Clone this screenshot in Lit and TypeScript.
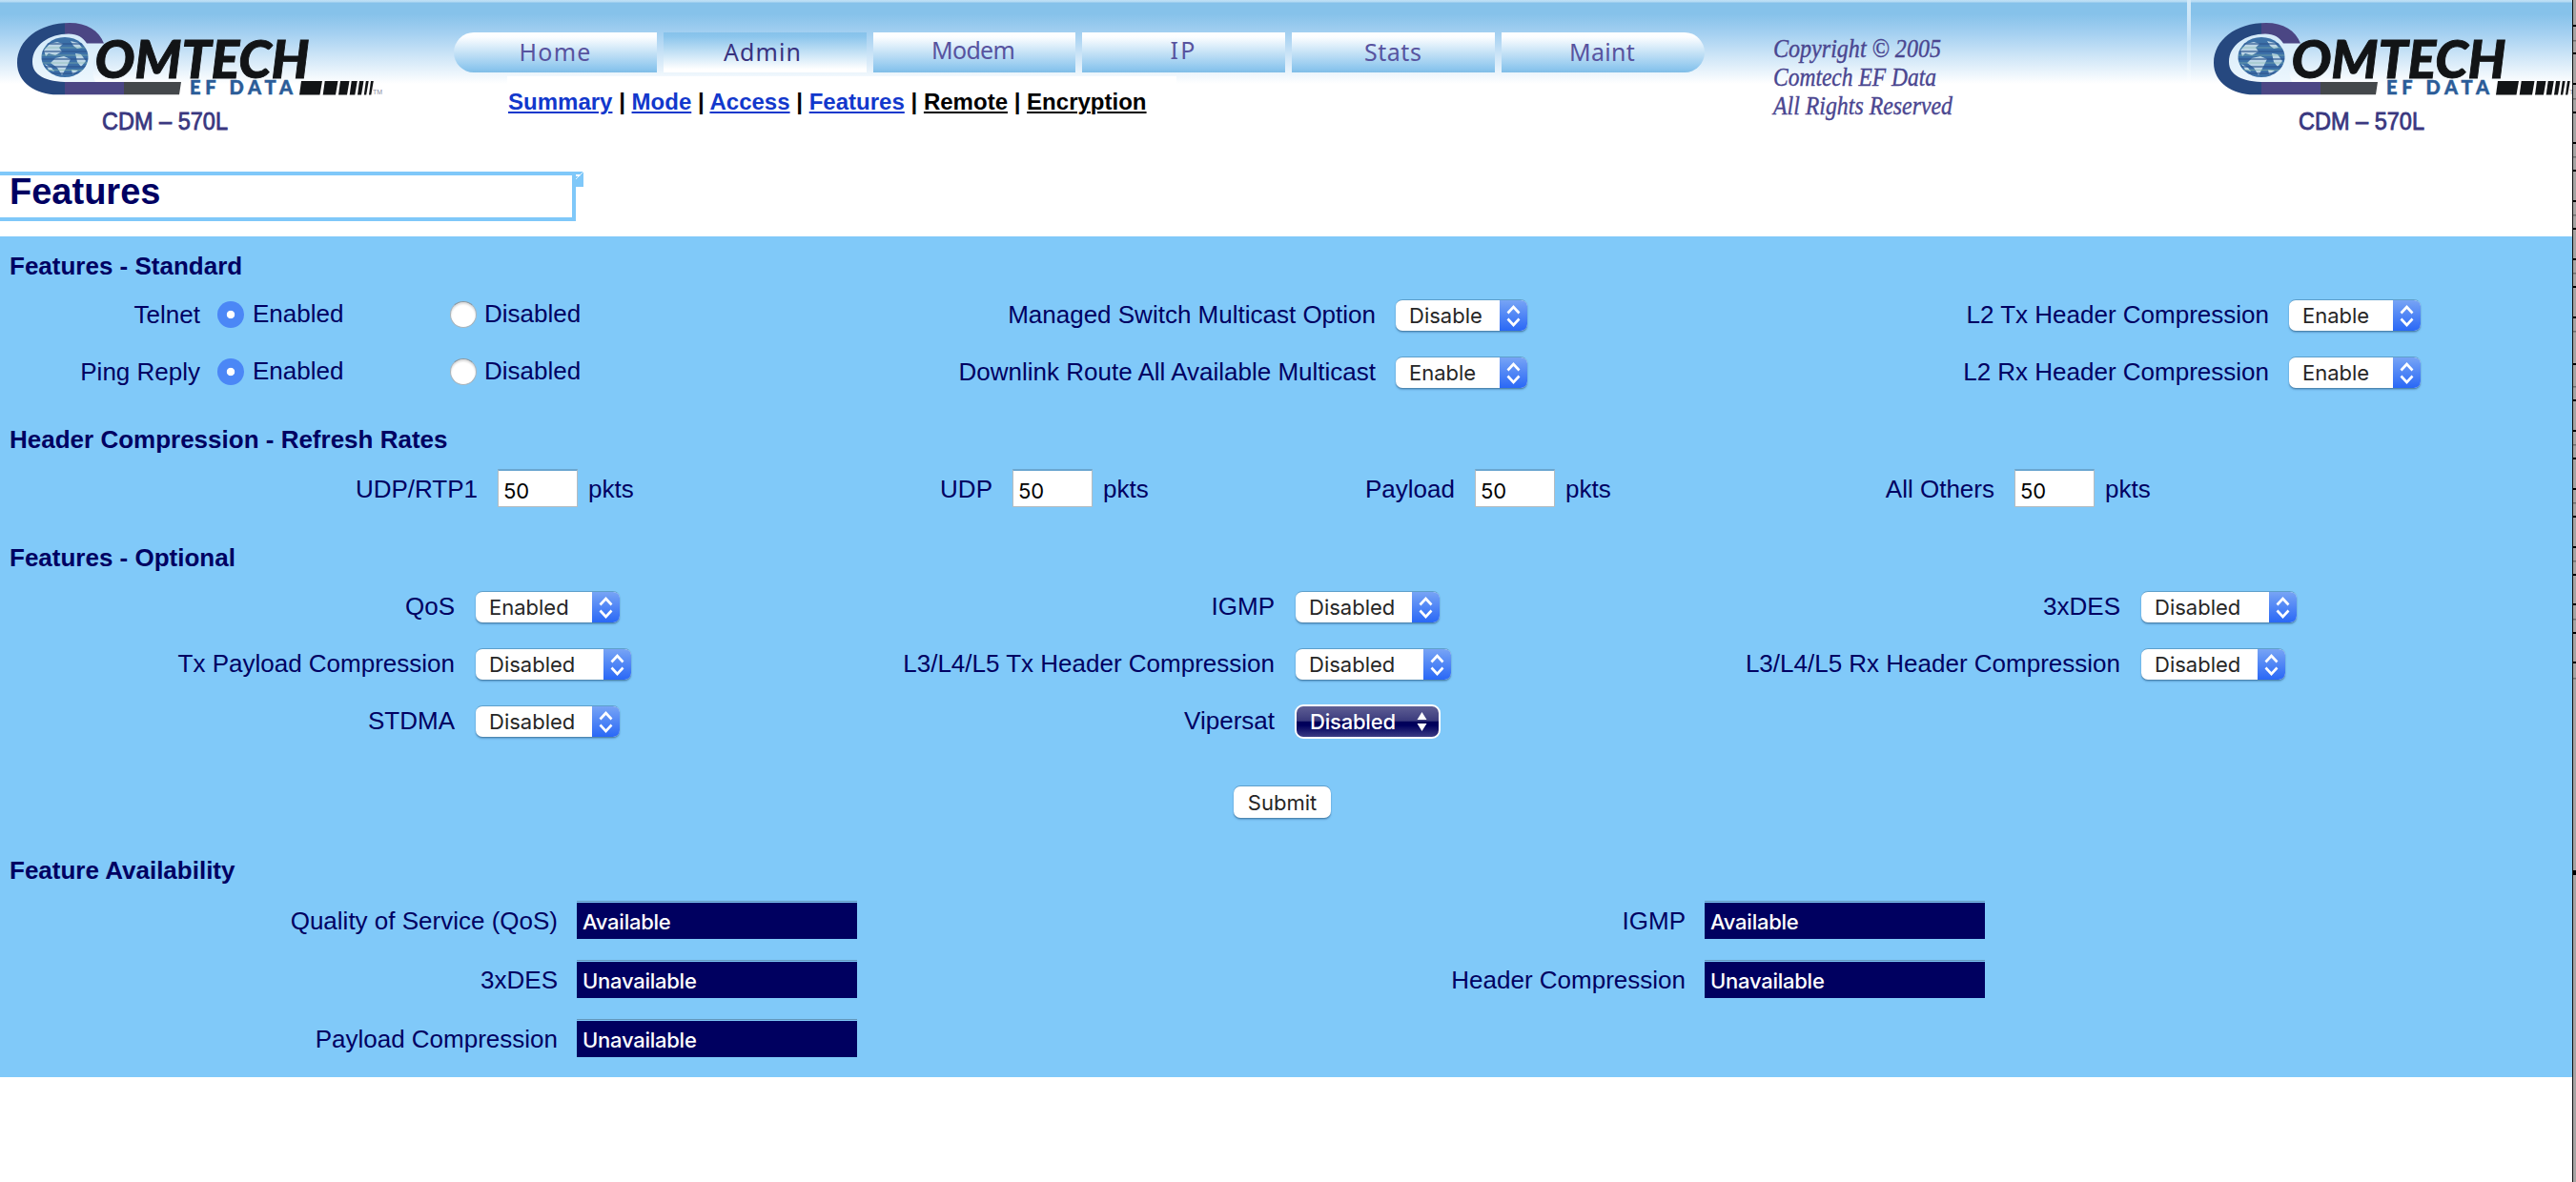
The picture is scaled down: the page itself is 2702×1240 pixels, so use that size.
import { LitElement, html, svg, css } from "lit";
import { customElement, property } from "lit/decorators.js";

@customElement("brand-logo")
class BrandLogo extends LitElement {
  static styles = css`
    :host { display: block; }
    .logo { display: block; overflow: hidden; }
    .word { font-family: Lato, "Liberation Sans", sans-serif; font-weight: 900; font-style: italic; }
    .sub { font-family: Lato, "Liberation Sans", sans-serif; font-weight: 900; }
    .model { font-family: "Liberation Sans", sans-serif; }
  `;
  @property({ type: Number }) width = 400;

  render() {
    const bars = [[314, 336.5], [338.7, 353], [355, 365], [366.7, 373.3], [375, 380], [381.8, 385.2], [387, 390.3]];
    return html`
      <svg class="logo" width=${this.width} height="150" viewBox="0 0 ${this.width} 150">
        <defs>
          <linearGradient id="ring" gradientUnits="userSpaceOnUse" x1="0" y1="0" x2="200" y2="0">
            <stop offset=".34" stop-color="#26487f" /><stop offset=".34" stop-color="#4b4684" />
            <stop offset=".65" stop-color="#4b4684" /><stop offset=".65" stop-color="#44484b" />
          </linearGradient>
          <clipPath id="globe"><ellipse cx="68" cy="60" rx="24.5" ry="21" /></clipPath>
        </defs>
        <path fill="#e6f3fc" d="M91 45C87 38 80 35 72 35C50 35 34 47 34 65C34 79 49 86 70 86L100 86Q94 75 100 60Q104 52 109 45Z" opacity=".7" />
        <path fill="url(#ring)" d="M109 45.5C104 32 91 24 73 24C41 24 18 42 18 66C18 87 38 99.300 60 99.300L188 99.300L190 86L72 86C48 86 34 79 34 65C34 47 52 35.500 72 35.500C81 35.500 87 39 91 45.500Z" />
        <g clip-path="url(#globe)">
          <rect x="43" y="38" width="50" height="44" fill="#3d72a8" />
          <path fill="#bcd6e6" d="M46 53L52 46L60 44L66 46L62 50L65 54L58 58L51 56L48 59ZM74 43L82 45L86 50L81 51L77 48ZM58 61L67 59L74 62L70 70L65 79L60 71L53 66ZM79 56L85 57L90 64L85 70L81 65ZM47 67L54 71L57 75L51 73ZM75 73L82 74L76 78Z" />
          <path stroke="#2d5590" stroke-width="1.800" opacity=".6" d="M43 46H93M43 54H93M43 62H93M43 70H93M43 77H93" />
          <path stroke="#86b9a8" stroke-width="1" opacity=".6" d="M43 50H93M43 58H93M43 66H93M43 73.500H93" />
        </g>
        <text class="word" x="99.500" y="81.500" font-size="55.500" textLength="225" lengthAdjust="spacing" fill="#121416" stroke="#121416" stroke-width=".9">OMTECH</text>
        <text class="sub" x="199" y="99" font-size="20" textLength="108" fill="#2b5c98" stroke="#2b5c98" stroke-width=".5">EF DATA</text>
        ${bars.map(([a, b]) => svg`<path fill="#121416" d="M${a + 2} 85H${b + 1.5}L${b - 1} 99.500H${a}Z" />`)}
        <text class="model" x="391" y="99" font-size="7" fill="#8a8aa0">TM</text>
        <text class="model" x="107" y="136" font-size="25" textLength="132" lengthAdjust="spacingAndGlyphs" fill="#39377f" stroke="#39377f" stroke-width=".8">CDM – 570L</text>
      </svg>
    `;
  }
}

@customElement("mac-select")
class MacSelect extends LitElement {
  static styles = css`
    :host { display: block; }
    .box {
      display: flex; justify-content: space-between; box-sizing: border-box; height: 33px;
      border-radius: 7px; overflow: hidden; background: #fff; color: #262626;
      border-top: 1px solid #5d9fcb;
      box-shadow: 0 1px 1px #4b84ad, 0 2px 2px rgba(40, 90, 140, .35);
      font: 22px/33px Inter, "Liberation Sans", sans-serif;
    }
    .text { padding-left: 14px; letter-spacing: 0; }
    .arrows { width: 29px; height: 33px; background: linear-gradient(#77a4f5, #2766f6); }
    .dark {
      height: 36px; margin: 1px -1px 0; border: 2.500px solid #fff; border-radius: 9px; box-shadow: none; color: #fff; font-weight: 500;
      line-height: 32px; background: linear-gradient(#5f5f94 0, #3a3a7c 48%, #000058 50%, #00005c 62%, #3b3b84 100%);
    }
    .dark .text { padding-left: 14px; letter-spacing: -.2px; }
    .dark .arrows { background: none; width: 32px; height: 31px; }
  `;
  @property() value = "";
  @property({ type: Number }) width = 151;
  @property({ type: Boolean }) dark = false;

  render() {
    return html`
      <div class="box ${this.dark ? "dark" : ""}" style="width:${this.width + (this.dark ? 2 : 0)}px">
        <span class="text">${this.value}</span>
        ${this.dark
          ? html`<svg class="arrows" viewBox="0 0 32 31"><path fill="#fff" d="M9.500 14L14.500 6L19.500 14ZM9.500 18L14.500 26L19.500 18Z" /></svg>`
          : html`<svg class="arrows" viewBox="0 0 29 33"><path fill="none" stroke="#fff" stroke-width="2.600" d="M8.500 13.500L14.500 7L20.500 13.500M8.500 19.500L14.500 26L20.500 19.500" /></svg>`}
      </div>
    `;
  }
}

type Option = [label: string, value: string, width: number, dark?: boolean];

const TABS = [
  { name: "Home", x: 68.5, y: 30, w: 75 },
  { name: "Admin", x: 63, y: 30, w: 81 },
  { name: "Modem", x: 61, y: 28, w: 88 },
  { name: "IP", x: 92.5, y: 28, w: 26 },
  { name: "Stats", x: 76, y: 30, w: 60 },
  { name: "Maint", x: 71, y: 30, w: 69 },
];

const OPTIONAL: Option[] = [
  ["QoS", "Enabled", 151], ["IGMP", "Disabled", 151], ["3xDES", "Disabled", 163],
  ["Tx Payload Compression", "Disabled", 163], ["L3/L4/L5 Tx Header Compression", "Disabled", 163], ["L3/L4/L5 Rx Header Compression", "Disabled", 151],
  ["STDMA", "Disabled", 151], ["Vipersat", "Disabled", 151, true],
];

const black = [27, 56, 88, 118, 150, 179, 211, 240, 272, 301, 333, 382, 420, 452, 481, 513, 542, 574, 603, 634, 664, 695];
const grey = [43, 104, 165, 226, 287, 348, 406, 467, 528, 589, 650, 712];

@customElement("app-root")
class AppRoot extends LitElement {
  static styles = css`
    :host { display: block; }
    .window { display: flex; width: 2702px; height: 1240px; overflow: hidden; background: #fff; }
    .page { width: 2698px; height: 1240px; font: 26px/30px "Liberation Sans", Arial, sans-serif; color: #000062; }
    .edge { width: 4px; height: 1240px; display: block; }

    .header {
      display: flex; height: 180px;
      background: linear-gradient(#c1e0f5 0, #b4daf3 2px, #86c2ea 3px, #86c2ea 15px, #a4d0f1 35px, #d3e8f8 62px, #fff 88px);
    }
    .left { width: 476px; }
    .middle { width: 1312px; padding-top: 34px; }
    .tabs { display: flex; gap: 7px; height: 42px; }
    .tab { display: block; width: 213px; height: 42px; background: linear-gradient(#fff 0, #fbfdff 12%, #8bc5ed 92%, #7fbde6); color: #57539f; }
    .tab.first { border-radius: 22px 0 0 22px; }
    .tab.last { border-radius: 0 22px 22px 0; }
    .tab.active { background: linear-gradient(#86c2ea 0, #8bc5ec 10%, #fff 92%); color: #38327f; }
    .tab-text { font: 25px "Noto Sans", "Open Sans", sans-serif; fill: currentColor; }
    .links { margin: 4px 0 0 56px; width: 702px; height: 56px; padding: 13px 0 0 1px; box-sizing: border-box; background: #fff;
      font-weight: bold; font-size: 24px; line-height: 28px; color: #000; white-space: pre; letter-spacing: .01px; }
    .link { color: #1238cc; text-decoration: underline; text-decoration-thickness: 2px; text-underline-offset: 2px; }
    .link.visited { color: #000; }
    .copy { width: 506px; height: 150px; }
    .copy-text { font: italic 27px "Liberation Serif", serif; fill: #4a4690; stroke: #4a4690; stroke-width: .4; }
    .rule { width: 4px; height: 88px; margin-right: 6px; background: linear-gradient(#d3e9f8, #c5e2f7 50%, #fff); }

    .title-row { display: flex; height: 68px; }
    .title { box-sizing: border-box; width: 604px; height: 52px; border: solid #7fc8f9; border-width: 4px 4px 4px 0; padding-left: 10px;
      font-weight: bold; font-size: 38px; line-height: 35px; }
    .corner { width: 8px; height: 16px; display: block; }

    .panel { box-sizing: border-box; height: 882px; padding-top: 10px; background: #80c9f9; }
    .heading { height: 42px; line-height: 42px; padding-left: 10px; font-weight: bold; }
    .grid { display: grid; align-items: center; grid-auto-rows: 60px; white-space: nowrap; }
    .standard { grid-template-columns: 210px 790px 443px 557px 380px 1fr; height: 140px; align-content: start; }
    .rates { grid-template-columns: 501px 399px 141px 259px 226px 274px 292px 1fr; height: 82px; align-content: start; }
    .optional { grid-template-columns: 477px 423px 437px 463px 424px 1fr; height: 180px; }
    .avail { grid-template-columns: 585px 715px 468px 1fr; grid-auto-rows: 62px; }
    .label { text-align: right; }
    .rates .label, .unit { padding-top: 2px; }
    .control { padding-left: 22px; }
    .standard .control { padding-left: 21px; }
    .radios { display: flex; align-items: center; padding-left: 18px; }
    .radio { width: 28px; height: 28px; box-sizing: border-box; border-radius: 50%; background: #fff; border: 1px solid #a9b3ba; border-top-color: #8b959c; box-shadow: inset 0 2px 2px #ddd; }
    .radio.on { border: 0; background: radial-gradient(circle, #fff 0 3.800px, #4b87f6 4.600px); box-shadow: none; }
    .choice { width: 207px; padding: 0 0 2px 9px; }
    .radio:not(.on) + .choice { padding-left: 8px; }
    .packets { display: flex; align-items: center; padding-left: 21px; gap: 11px; }
    .input { width: 84px; height: 40px; box-sizing: border-box; border: 1px solid #b5bcc0; border-top: 2px solid #6aa6d0; background: #fff; color: #000;
      padding: 3px 0 0 5px; font-size: 22px; line-height: 36px; letter-spacing: 0; font-family: Inter, "Liberation Sans", sans-serif; }
    .submit-row { height: 106px; display: flex; justify-content: flex-start; padding: 39px 0 0 1294px; box-sizing: border-box; }
    .submit { width: 102px; height: 33px; border: 0; padding: 0; border-radius: 7px; background: #fff; color: #262626; box-shadow: 0 -1px 0 #5d9fcb, 0 1px 1px #4b84ad, 0 2px 2px rgba(40, 90, 140, .35);
      font: 22px/34px Inter, "Liberation Sans", sans-serif; }
    .status { width: 294px; height: 40px; margin-left: 20px; box-sizing: border-box; border-top: 1px solid #6296bb; padding-top: 1px; }
    .status-text { display: block; height: 38px; background: #000060; color: #fff; padding-left: 6px; font: 500 22px/40px Inter, "Liberation Sans", sans-serif; letter-spacing: -.25px; }
    .avail .label { padding-top: 1px; }
  `;

  private select([label, value, width, dark]: Option) {
    return html`<div class="label">${label}</div>
      <div class="control"><mac-select .value=${value} .width=${width} .dark=${!!dark}></mac-select></div>`;
  }

  private radios(label: string) {
    return html`<div class="label">${label}</div>
      <div class="radios">
        <span class="radio on"></span><span class="choice">Enabled</span>
        <span class="radio"></span><span class="choice">Disabled</span>
      </div>`;
  }

  private status(label: string, value: string) {
    return html`<div class="label">${label}</div><div class="status"><span class="status-text">${value}</span></div>`;
  }

  render() {
    const links = ["Summary", "Mode", "Access", "Features", "Remote", "Encryption"];
    return html`
      <div class="window">
        <div class="page">
          <header class="header">
            <brand-logo class="left" .width=${476}></brand-logo>
            <div class="middle">
              <nav class="tabs">
                ${TABS.map((t, i) => html`<svg class="tab ${i === 0 ? "first" : ""} ${i === 1 ? "active" : ""} ${i === 5 ? "last" : ""}" viewBox="0 0 213 42">
                  <text class="tab-text" x=${t.x} y=${t.y} textLength=${t.w} lengthAdjust="spacing">${t.name}</text></svg>`)}
              </nav>
              <div class="links">${links.map((l, i) => html`${i ? " | " : ""}<a class="link ${i > 3 ? "visited" : ""}">${l}</a>`)}</div>
            </div>
            <svg class="copy" viewBox="0 0 506 150">
              <text class="copy-text" x="72" y="60" textLength="176" lengthAdjust="spacingAndGlyphs">Copyright © 2005</text>
              <text class="copy-text" x="72" y="90" textLength="171" lengthAdjust="spacingAndGlyphs">Comtech EF Data</text>
              <text class="copy-text" x="72" y="120" textLength="188" lengthAdjust="spacingAndGlyphs">All Rights Reserved</text>
            </svg>
            <div class="rule"></div>
            <brand-logo .width=${394}></brand-logo>
          </header>
          <div class="title-row">
            <div class="title">Features</div>
            <svg class="corner" viewBox="0 0 8 16"><rect width="8" height="16" fill="#7fc8f9" /><path d="M0 3H5L4 5H0Z" fill="#fff" /><path d="M0 8L8 0" stroke="#fff" stroke-width=".8" /></svg>
          </div>
          <main class="panel">
            <div class="heading">Features - Standard</div>
            <div class="grid standard">
              ${this.radios("Telnet")}
              ${this.select(["Managed Switch Multicast Option", "Disable", 138])}
              ${this.select(["L2 Tx Header Compression", "Enable", 138])}
              ${this.radios("Ping Reply")}
              ${this.select(["Downlink Route All Available Multicast", "Enable", 138])}
              ${this.select(["L2 Rx Header Compression", "Enable", 138])}
            </div>
            <div class="heading">Header Compression - Refresh Rates</div>
            <div class="grid rates">
              ${["UDP/RTP1", "UDP", "Payload", "All Others"].map((l) => html`<div class="label">${l}</div>
                <div class="packets"><div class="input">50</div><span class="unit">pkts</span></div>`)}
            </div>
            <div class="heading">Features - Optional</div>
            <div class="grid optional">${OPTIONAL.map((o) => this.select(o))}</div>
            <div class="submit-row"><button class="submit">Submit</button></div>
            <div class="heading">Feature Availability</div>
            <div class="grid avail">
              ${this.status("Quality of Service (QoS)", "Available")}
              ${this.status("IGMP", "Available")}
              ${this.status("3xDES", "Unavailable")}
              ${this.status("Header Compression", "Unavailable")}
              ${this.status("Payload Compression", "Unavailable")}
            </div>
          </main>
        </div>
        <svg class="edge" viewBox="0 0 4 1240">
          <rect width="4" height="1240" fill="#a6a4a3" />
          ${grey.map((y) => svg`<rect x="1" y=${y - 1} width="3" height="1.500" fill="#6e6e6e" />`)}
          ${black.map((y) => svg`<rect x="1" y=${y - 1} width="3" height="2" fill="#000" />`)}
          <rect x="1" y="913" width="3" height="5" fill="#000" />
          <rect width="1" height="1240" fill="#111" />
        </svg>
      </div>
    `;
  }
}
